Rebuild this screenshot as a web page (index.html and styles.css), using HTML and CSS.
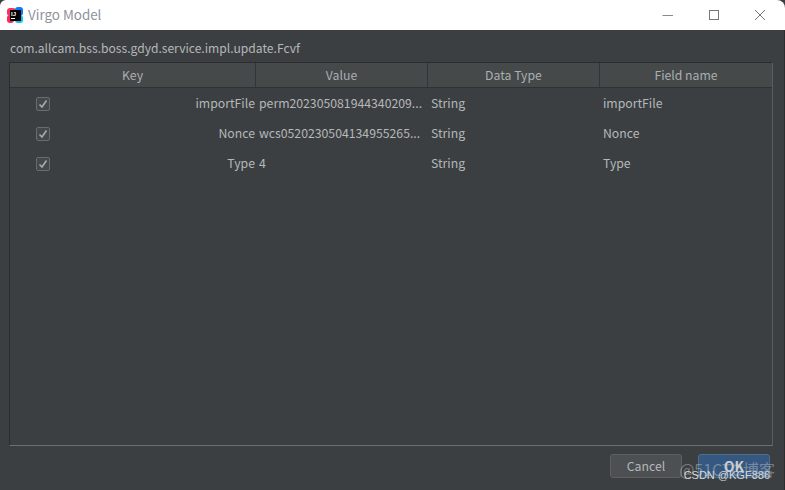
FILE: index.html
```html
<!DOCTYPE html>
<html lang="en">
<head>
    <meta charset="UTF-8">
    <meta name="viewport" content="width=device-width, initial-scale=1.0">
    <title>Virgo Model</title>
    <link rel="stylesheet" href="styles.css">
</head>
<body>
    <div class="window">
        <!-- Title bar -->
        <div class="titlebar">
            <svg class="app-icon" width="16" height="16" viewBox="0 0 16 16">
                <rect x="0" y="1" width="9" height="8" rx="3" fill="#fe315d"/>
                <rect x="8" y="0" width="8" height="9" rx="3" fill="#087cfa"/>
                <rect x="0" y="8" width="7" height="8" rx="3" fill="#fe2857"/>
                <rect x="8" y="8" width="8" height="8" rx="3" fill="#07c3f2"/>
                <rect x="3" y="3" width="11" height="11" fill="#000"/>
                <text x="4" y="9" class="app-icon-text">IJ</text>
                <rect x="4" y="11" width="4" height="1" fill="#fff"/>
            </svg>
            <span class="title">Virgo Model</span>
            <div class="window-buttons">
                <svg width="12" height="12" viewBox="0 0 12 12"><path d="M0.5 6.5H11" stroke="#8a8a8a" fill="none"/></svg>
                <svg width="12" height="12" viewBox="0 0 12 12"><rect x="1.5" y="1.5" width="9" height="9" stroke="#777" fill="none"/></svg>
                <svg width="12" height="12" viewBox="0 0 12 12"><path d="M1 1L11 11M11 1L1 11" stroke="#777" fill="none"/></svg>
            </div>
        </div>

        <div class="content">
            <div class="class-name">com.allcam.bss.boss.gdyd.service.impl.update.Fcvf</div>

            <!-- Table -->
            <div class="table">
                <div class="row header">
                    <div class="head-cell">Key</div>
                    <div class="head-cell">Value</div>
                    <div class="head-cell">Data Type</div>
                    <div class="head-cell">Field name</div>
                </div>
                <div class="row">
                    <div class="cell key"><span class="check"><svg width="10" height="10" viewBox="0 0 10 10"><path d="M1.5 5.5L4 8L8.5 1.5" stroke="#a8a8a8" stroke-width="1.7" fill="none"/></svg></span><span>importFile</span></div>
                    <div class="cell">perm202305081944340209...</div>
                    <div class="cell">String</div>
                    <div class="cell">importFile</div>
                </div>
                <div class="row">
                    <div class="cell key"><span class="check"><svg width="10" height="10" viewBox="0 0 10 10"><path d="M1.5 5.5L4 8L8.5 1.5" stroke="#a8a8a8" stroke-width="1.7" fill="none"/></svg></span><span>Nonce</span></div>
                    <div class="cell">wcs0520230504134955265...</div>
                    <div class="cell">String</div>
                    <div class="cell">Nonce</div>
                </div>
                <div class="row">
                    <div class="cell key"><span class="check"><svg width="10" height="10" viewBox="0 0 10 10"><path d="M1.5 5.5L4 8L8.5 1.5" stroke="#a8a8a8" stroke-width="1.7" fill="none"/></svg></span><span>Type</span></div>
                    <div class="cell">4</div>
                    <div class="cell">String</div>
                    <div class="cell">Type</div>
                </div>
            </div>

            <div class="buttons">
                <button class="btn">Cancel</button>
                <button class="btn ok">OK</button>
            </div>
        </div>

        <!-- Watermarks over the buttons -->
        <div class="mark-back">@51CTO博客</div>
        <div class="mark-front">CSDN @KGF886</div>
    </div>
</body>
</html>
```

FILE: styles.css
```css
body { margin: 0; background-color: #3c3f41; font-family: "Noto Sans CJK SC", "Noto Sans", sans-serif; font-size: 12.25px; color: #b4b8ba; }
.window { position: relative; width: 785px; height: 490px; overflow: hidden; background-color: #3c3f41; }

/* Title bar */
.titlebar { display: flex; align-items: center; height: 30px; padding-left: 7px; background-color: #fff; border-radius: 6px 8px 0 0; box-sizing: border-box; }
.app-icon { flex: none; }
.app-icon-text { font-family: "Liberation Sans", sans-serif; font-size: 6px; font-weight: bold; fill: #fff; }
.title { margin-left: 5px; margin-top: -2px; color: #8e939b; font-size: 13.4px; }
.window-buttons { display: flex; gap: 34px; margin-left: auto; padding-right: 19px; }

/* Content */
.content { display: flex; flex-direction: column; height: 460px; padding: 0 11px 0 9px; border-right: 1px solid #2b2d2f; box-sizing: border-box; }
.class-name { height: 32px; line-height: 36px; padding-left: 1px; color: #b4b8ba; font-size: 12.1px; }
.table { height: 384px; border: 1px solid #2a2c2e; border-bottom-color: #6c6f71; border-right-color: #5a5d5f; box-sizing: border-box; }
.row { display: grid; grid-template-columns: 246px 172px 172px 1fr; height: 30px; align-items: center; }
.row.header { height: 25px; background-color: #45494a; border-bottom: 1px solid #2f3133; box-sizing: border-box; margin-bottom: 1px; }
.row:nth-child(2) { margin-top: 1px; }
.head-cell { height: 100%; line-height: 24px; text-align: center; border-right: 1px solid #323537; box-sizing: border-box; color: #a9afb2; }
.head-cell:last-child { border-right: none; }
.cell { padding-left: 3px; padding-bottom: 2px; white-space: nowrap; }
.cell.key { display: flex; align-items: center; justify-content: space-between; padding: 0 1px 0 26px; }
.cell.key span:last-child { margin-bottom: 2px; }
.check { display: flex; align-items: center; justify-content: center; width: 12px; height: 12px; border: 1px solid #6b6b6b; border-radius: 2px; background-color: #43494a; }

/* Buttons */
.buttons { display: flex; justify-content: flex-end; gap: 16px; margin-top: 8px; margin-right: 3px; }
.btn { width: 72px; height: 24px; padding: 0; border: 1px solid #5e6060; border-radius: 3px; background-color: #4c5052; color: #b4b8ba; font: inherit; }
.btn.ok { background-color: #365880; border-color: #4c708c; color: #c5cdd3; font-weight: bold; font-size: 14px; }

/* Watermarks */
.mark-back { position: absolute; right: 10px; top: 457px; color: rgba(210, 210, 210, 0.42); font-size: 16px; }
.mark-front { position: absolute; right: 15px; top: 469px; color: #d8d8d8; font-family: "Liberation Sans", sans-serif; font-size: 11px; }
```
